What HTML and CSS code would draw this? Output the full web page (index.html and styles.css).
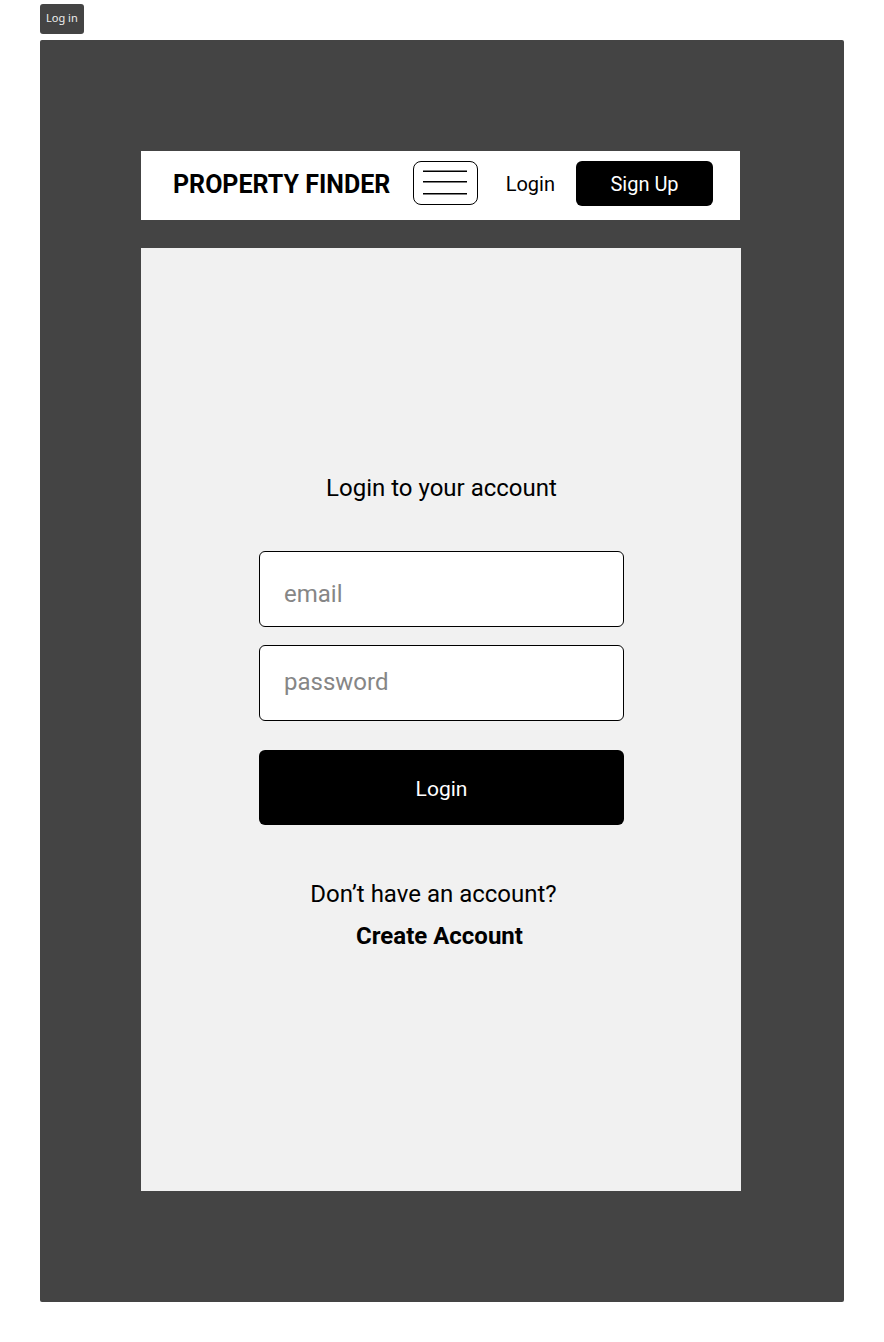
FILE: index.html
```html
<!DOCTYPE html>
<html lang="en">
<head>
  <meta charset="utf-8">
  <meta name="viewport" content="width=device-width, initial-scale=1">
  <title>Log in</title>
  <link rel="stylesheet" href="styles.css">
</head>
<body>
  <div class="tag">Log in</div>
  <div class="frame">
    <header class="nav">
      <span class="brand">PROPERTY FINDER</span>
      <button class="menu" type="button" aria-label="Menu">
        <svg class="menu-icon" viewBox="0 0 44 26" fill="none" stroke="#000" stroke-width="1.4" aria-hidden="true">
          <path d="M0 1.2H44M0 11.7H44M0 23.7H44"/>
        </svg>
      </button>
      <a class="nav-link" href="#login">Login</a>
      <button class="signup" type="button">Sign Up</button>
    </header>
    <main class="panel">
      <form class="login" id="login">
        <h1 class="title">Login to your account</h1>
        <input class="field field-email" type="email" placeholder="email" aria-label="email">
        <input class="field field-password" type="password" placeholder="password" aria-label="password">
        <button class="submit" type="button">Login</button>
      </form>
      <p class="question">Don’t have an account?</p>
      <a class="create" href="#create">Create Account</a>
    </main>
  </div>
</body>
</html>
```
FILE: styles.css
```css
* {
  box-sizing: border-box;
}

body {
  margin: 0;
  padding: 4px 40px 40px;
  background: #fff;
  color: #000;
  font-family: Roboto, "Liberation Sans", sans-serif;
  font-size: 24px;
  line-height: 32px;
}

button,
input {
  font-family: inherit;
}

a {
  color: inherit;
  text-decoration: none;
}

.tag {
  width: fit-content;
  padding: 0 6px 2px;
  border-radius: 3px;
  background: #444;
  color: #eee;
  font-family: "Noto Sans", sans-serif;
  font-size: 11px;
  line-height: 28px;
}

.frame {
  display: flex;
  flex-direction: column;
  gap: 28px;
  margin-top: 6px;
  padding: 111px 103px 111px 101px;
  border-radius: 2px;
  background: #444;
}

.nav {
  display: flex;
  align-items: center;
  margin-right: 1px;
  padding: 10px 27px 14px 32px;
  background: #fff;
}

.brand {
  margin-right: auto;
  padding-top: 2px;
  font-size: 25px;
  font-weight: 700;
}

.menu {
  display: flex;
  align-items: center;
  align-self: flex-start;
  justify-content: center;
  width: 65px;
  height: 44px;
  padding: 0;
  border: 1px solid #000;
  border-radius: 8px;
  background: #fff;
}

.menu-icon {
  width: 44px;
  height: 26px;
}

.nav-link {
  margin: 0 21px 0 28px;
  font-size: 20px;
}

.signup {
  width: 137px;
  height: 45px;
  padding: 0;
  border: 0;
  border-radius: 6px;
  background: #000;
  color: #fff;
  font-size: 20px;
}

.panel {
  display: flex;
  flex-direction: column;
  align-items: center;
  padding: 224px 117px 239px 118px;
  background: #f1f1f1;
}

.login {
  display: flex;
  flex-direction: column;
  width: 100%;
}

.title {
  margin: 0 0 47px;
  font-size: 24px;
  font-weight: 400;
  line-height: 32px;
  text-align: center;
}

.field {
  width: 100%;
  height: 76px;
  padding: 0 24px;
  border: 1px solid #000;
  border-radius: 6px;
  background: #fff;
  color: #000;
  font-size: 24px;
}

.field-email {
  margin-bottom: 18px;
  padding-top: 10px;
}

.field-password {
  margin-bottom: 29px;
  padding-bottom: 2px;
}

.field::placeholder {
  color: #868686;
  opacity: 1;
}

.submit {
  height: 75px;
  padding: 2px 0 0;
  border: 0;
  border-radius: 6px;
  background: #000;
  color: #fff;
  font-size: 21px;
}

.question {
  margin: 53px 16px 10px 0;
}

.create {
  margin-right: 4px;
  font-weight: 700;
}
```
